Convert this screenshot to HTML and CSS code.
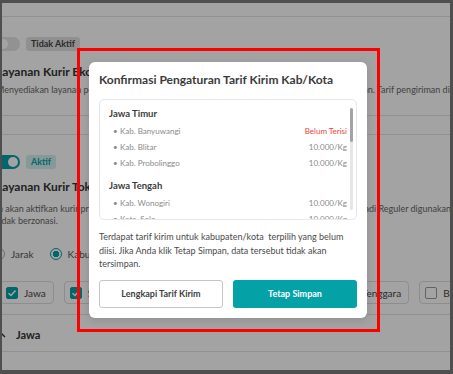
FILE: index.html
```html
<!DOCTYPE html>
<html lang="id">
<head>
    <meta charset="UTF-8">
    <meta name="viewport" content="width=device-width, initial-scale=1.0">
    <title>Pengaturan Kurir</title>
    <link rel="stylesheet" href="styles.css">
</head>
<body>
    <div class="screen">
        <main class="page">
            <section class="courier">
                <div class="status">
                    <span class="switch"></span>
                    <span class="badge">Tidak Aktif</span>
                </div>
                <h2>Layanan Kurir Ekonomi</h2>
                <p class="desc">Menyediakan layanan pengiriman hemat dengan estimasi waktu lebih lama untuk seluruh tujuan. Tarif pengiriman dihitung berdasarkan berat paket.</p>
            </section>

            <section class="courier">
                <div class="status">
                    <span class="switch on"></span>
                    <span class="badge active">Aktif</span>
                </div>
                <h2>Layanan Kurir Toko</h2>
                <p class="desc">Ia akan aktifkan kurir prioritas toko, tarif dasar, yang sudah ditetapkan pada kurir standar menjadi Reguler digunakan untuk<br>tidak berzonasi.</p>

                <div class="radios">
                    <label class="radio"><span class="dot"></span>Jarak</label>
                    <label class="radio"><span class="dot checked"></span>Kabupaten/Kota</label>
                </div>

                <div class="chips">
                    <span class="chip"><span class="box checked"></span>Jawa</span>
                    <span class="chip"><span class="box checked"></span>Sumatera</span>
                    <span class="chip"><span class="box checked"></span>Kalimantan</span>
                    <span class="chip"><span class="box"></span>Maluku</span>
                    <span class="chip"><span class="box"></span>Nusa Tenggara</span>
                    <span class="chip"><span class="box"></span>Bali</span>
                </div>
            </section>

            <div class="region">
                <svg width="10" height="6" viewBox="0 0 10 6"><path d="M1 5 L5 1 L9 5" fill="none" stroke="#333" stroke-width="1.4"/></svg>
                <span>Jawa</span>
            </div>
        </main>

        <div class="backdrop"></div>

        <div class="modal">
            <h3>Konfirmasi Pengaturan Tarif Kirim Kab/Kota</h3>

            <div class="city-list">
                <div class="group">
                    <h4>Jawa Timur</h4>
                    <ul>
                        <li><span>Kab. Banyuwangi</span><span class="empty">Belum Terisi</span></li>
                        <li><span>Kab. Blitar</span><span>10.000/Kg</span></li>
                        <li><span>Kab. Probolinggo</span><span>10.000/Kg</span></li>
                    </ul>
                </div>
                <div class="group">
                    <h4>Jawa Tengah</h4>
                    <ul>
                        <li><span>Kab. Wonogiri</span><span>10.000/Kg</span></li>
                        <li><span>Kota. Solo</span><span>10.000/Kg</span></li>
                    </ul>
                </div>
                <div class="group">
                    <h4>Jawa Barat</h4>
                    <ul>
                        <li><span>Kab. Bogor</span><span>10.000/Kg</span></li>
                        <li><span>Kota. Bandung</span><span>10.000/Kg</span></li>
                    </ul>
                </div>

                <!-- scroll position of the list, first third shown -->
                <span class="scrollbar"><span class="thumb"></span></span>
            </div>

            <p class="note">Terdapat tarif kirim untuk kabupaten/kota&nbsp; terpilih yang belum diisi. Jika Anda klik Tetap Simpan, data tersebut tidak akan tersimpan.</p>

            <div class="actions">
                <button class="btn-outline">Lengkapi Tarif Kirim</button>
                <button class="btn-primary">Tetap Simpan</button>
            </div>
        </div>

        <div class="highlight"></div>
    </div>
</body>
</html>
```

FILE: styles.css
```css
:root {
    --teal: #04a1a7;
    --text: #3b3b3b;
    --muted: #8a8a8a;
    --line: #e3e3e3;
}

* {
    box-sizing: border-box;
}

body {
    margin: 0;
    font-family: Lato, 'Noto Sans', sans-serif;
    color: var(--text);
}

.screen {
    position: relative;
    width: 453px;
    height: 374px;
    overflow: hidden;
    background: white;
    border-style: solid;
    border-color: #4f4f4f;
    border-width: 3px 3px 4px 2px;
}

/* page behind the dialog */

.page {
    margin-left: -6px;
    padding-top: 13px;
}

.courier {
    border-top: 1px solid var(--line);
    border-bottom: 1px solid var(--line);
    padding: 20px 0 19px;
}

.courier + .courier {
    margin-top: 18px;
    padding-bottom: 10px;
}

.status {
    display: flex;
    align-items: center;
    gap: 6px;
    height: 14px;
}

.switch {
    position: relative;
    width: 24px;
    height: 14px;
    border-radius: 7px;
    background: #e4e4e4;
}

.switch::after {
    content: "";
    position: absolute;
    top: 2px;
    left: 2px;
    width: 10px;
    height: 10px;
    border-radius: 50%;
    background: white;
}

.switch.on {
    background: var(--teal);
}

.switch.on::after {
    left: 12px;
}

.badge {
    padding: 0 5px;
    border-radius: 3px;
    background: #e2e2e2;
    font-size: 9px;
    font-weight: 700;
    line-height: 14px;
    color: #444;
}

.badge.active {
    background: #d3eeee;
    color: var(--teal);
}

h2 {
    margin: 13px 0 0;
    font-size: 12px;
    font-weight: 700;
    line-height: 16px;
    color: #333;
}

.courier + .courier h2 {
    margin-top: 10px;
}

.desc {
    margin: 4px 0 0;
    font-size: 9px;
    line-height: 12px;
    color: #666;
    white-space: nowrap;
}

.courier + .courier .desc {
    margin-top: 8px;
}

.radios {
    display: flex;
    align-items: center;
    gap: 16px;
    margin: 20px 0 0 -3px;
    font-size: 10px;
    line-height: 14px;
    color: #555;
}

.radio {
    display: flex;
    align-items: center;
    gap: 6px;
}

.dot {
    width: 12px;
    height: 12px;
    border-radius: 50%;
    border: 1.5px solid #aaa;
}

.dot.checked {
    border-color: var(--teal);
    background: radial-gradient(circle, var(--teal) 0 3px, white 3.5px);
}

.chips {
    display: flex;
    gap: 10px;
    margin: 20px 0 0 4px;
    white-space: nowrap;
}

.chip {
    display: flex;
    align-items: center;
    gap: 6px;
    height: 23px;
    padding: 0 7px 0 5px;
    border: 1px solid #ddd;
    border-radius: 4px;
    font-size: 10px;
    color: #444;
}

.box {
    width: 12px;
    height: 12px;
    border: 1px solid #999;
    border-radius: 2px;
}

.box.checked {
    border-color: var(--teal);
    background: var(--teal) url("data:image/svg+xml,%3Csvg xmlns='http://www.w3.org/2000/svg' viewBox='0 0 12 12'%3E%3Cpath d='M2.5 6.2 L5 8.5 L9.5 3.5' fill='none' stroke='white' stroke-width='1.5'/%3E%3C/svg%3E") center / 12px no-repeat;
}

.region {
    display: flex;
    align-items: center;
    gap: 10px;
    padding: 12px 0 8px;
    border-bottom: 1px solid var(--line);
    font-size: 11px;
    font-weight: 700;
    line-height: 16px;
    color: #333;
}

.backdrop {
    position: absolute;
    inset: 0;
    background: rgba(0, 0, 0, 0.36);
}

/* dialog */

.modal {
    position: absolute;
    left: 87px;
    top: 59px;
    width: 278px;
    padding: 10px;
    border-radius: 6px;
    background: white;
    box-shadow: 0 2px 8px rgba(0, 0, 0, 0.12);
}

h3 {
    margin: 0;
    font-size: 12px;
    font-weight: 700;
    line-height: 16px;
    color: var(--text);
}

.city-list {
    position: relative;
    height: 121px;
    margin-top: 11px;
    padding: 7px 9px 0 9px;
    border: 1px solid #e6e6ee;
    border-radius: 5px;
    overflow: hidden;
}

.scrollbar {
    position: absolute;
    top: 8px;
    bottom: 9px;
    right: 3px;
    width: 3px;
    border-radius: 2px;
    background: #e6e6e6;
}

.thumb {
    display: block;
    height: 34px;
    border-radius: 2px;
    background: #a3a3a3;
}

.group + .group {
    margin-top: 8px;
}

h4 {
    margin: 0;
    font-size: 9.5px;
    font-weight: 700;
    line-height: 14px;
    color: var(--text);
}

ul {
    margin: 2px 0 0;
    padding: 0;
    list-style: none;
}

li {
    display: flex;
    justify-content: space-between;
    padding-left: 4px;
    font-size: 8px;
    line-height: 16px;
    color: var(--muted);
}

li span:first-child::before {
    content: "\2022";
    display: inline-block;
    width: 7px;
}

.empty {
    color: #f0443a;
}

.note {
    margin: 10px 0 0;
    font-size: 9px;
    line-height: 13.5px;
    color: #4a4a4a;
}

.actions {
    display: grid;
    grid-template-columns: 1fr 1fr;
    gap: 10px;
    margin-top: 9px;
}

button {
    height: 28px;
    border-radius: 3px;
    font-family: inherit;
    font-size: 9px;
    font-weight: 700;
    cursor: pointer;
}

.btn-outline {
    border: 1px solid #c6c6c6;
    background: white;
    color: #404040;
}

.btn-primary {
    border: none;
    background: var(--teal);
    color: white;
}

/* red review box drawn over the dialog */

.highlight {
    position: absolute;
    left: 75px;
    top: 45px;
    width: 303px;
    height: 284px;
    border: 3px solid #ff0000;
}
```
